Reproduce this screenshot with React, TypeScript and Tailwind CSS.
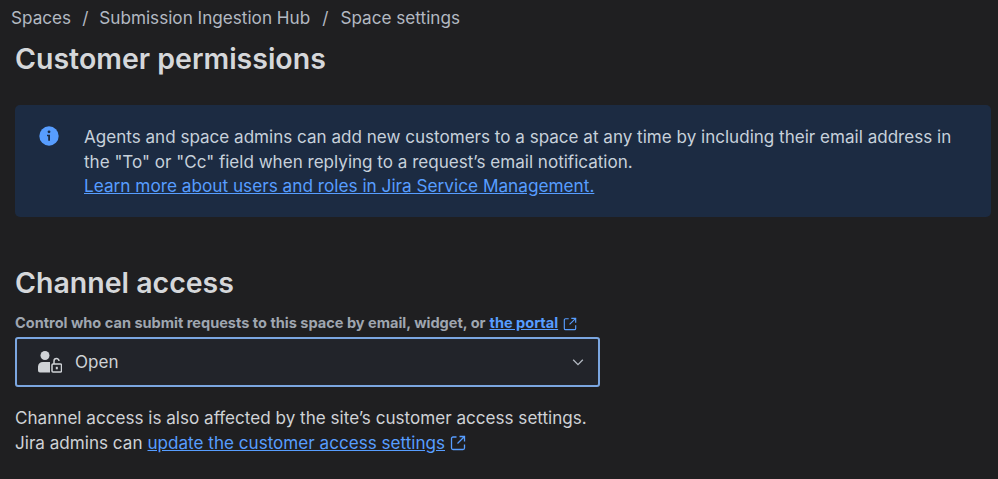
import React from 'react';

function ExternalIcon({ className }: { className: string }) {
  return (
    <svg viewBox="0 0 16 16" fill="none" stroke="currentColor" strokeWidth="1.3" className={className}>
      <path d="M6.500 2H3a1.500 1.500 0 0 0-1.500 1.500v9.500A1.500 1.500 0 0 0 3 14.500h10a1.500 1.500 0 0 0 1.500-1.500V9.500" />
      <path d="M9.500 1.500h5v5M14.500 1.500 7.500 8.500" />
    </svg>
  );
}

export default function App() {
  return (
    <div className="w-[998px] h-[479px] overflow-hidden bg-[#1f1f21] font-['Inter',sans-serif] text-[#cfd2d6]">
      {/* Breadcrumbs */}
      <nav className="flex items-center pl-[11px] pt-[6px] h-[30px] text-[17.150px] leading-6 text-[#b3b9c2]">
        <span>Spaces</span>
        <span className="mx-[11px]">/</span>
        <span>Submission Ingestion Hub</span>
        <span className="mx-[12px]">/</span>
        <span>Space settings</span>
      </nav>

      <div className="px-[15px]">
        <h1 className="mt-[10px] text-[28.500px] leading-[38px] font-semibold text-[#d5d7da]">Customer permissions</h1>

        {/* Info banner */}
        <div className="mt-[27px] w-[976px] h-[112px] flex rounded-[5px] bg-[#1c2b42] pl-[24px] pt-[20px]">
          <svg viewBox="0 0 20 20" className="w-[20px] h-[20px] mt-[1px] shrink-0">
            <circle cx="10" cy="10" r="9.700" fill="#579dff" />
            <circle cx="10" cy="5.800" r="1.400" fill="#1c2b42" />
            <path d="M8 8.800h3v6H9.200v-4.500H8z" fill="#1c2b42" />
          </svg>
          <div className="ml-[25px] text-[17.070px] leading-[24.500px]">
            <p className="text-[#c7d1db]">
              Agents and space admins can add new customers to a space at any time by including their email address in
              <br />
              the "To" or "Cc" field when replying to a request’s email notification.
            </p>
            <a className="text-[17.220px] text-[#579dff] underline">Learn more about users and roles in Jira Service Management.</a>
          </div>
        </div>

        <h2 className="mt-[47px] text-[28.500px] leading-[38px] font-semibold text-[#d5d7da]">Channel access</h2>

        <div className="mt-[12px] flex items-center h-[20px] text-[14.550px] font-bold text-[#9fa6b0]">
          <span>Control who can submit requests to this space by email, widget, or</span>
          <a className="ml-[4px] text-[#579dff] underline">the portal</a>
          <ExternalIcon className="ml-[5px] w-[14px] h-[14px] text-[#579dff]" />
        </div>

        {/* Select */}
        <div className="mt-[3px] w-[585px] h-[50px] flex items-center rounded-[3px] border-2 border-[#7ba6e0] bg-[#22242a] pl-[21px] pr-[13px]">
          <svg viewBox="0 0 24 24" className="w-[24px] h-[24px] text-[#cfd2d6]" fill="currentColor">
            <circle cx="7" cy="5.500" r="4.500" />
            <path d="M0 16.500a5 5 0 0 1 5-4.500h7v10.500H2a2 2 0 0 1-2-2z" />
            <rect x="14" y="14" width="9.500" height="8" rx="1" fill="none" stroke="currentColor" strokeWidth="1.500" />
            <path d="M16 14v-3a2.500 2.500 0 0 1 5 0" fill="none" stroke="currentColor" strokeWidth="1.500" />
            <rect x="17.800" y="16.800" width="2" height="2.500" />
          </svg>
          <span className="ml-[13px] text-[17.050px] text-[#cfd2d6]">Open</span>
          <svg viewBox="0 0 16 16" className="ml-auto w-[14px] h-[14px] text-[#b3b9c2]" fill="none" stroke="currentColor" strokeWidth="1.500">
            <path d="M2.500 5.500 8 11l5.500-5.500" />
          </svg>
        </div>

        <div className="mt-[19px] text-[17.100px] leading-[24.500px] text-[#cfd2d6]">
          <p>Channel access is also affected by the site’s customer access settings.</p>
          <p className="flex items-center">
            Jira admins can
            <a className="ml-[5px] text-[#579dff] underline">update the customer access settings</a>
            <ExternalIcon className="ml-[5px] w-[16px] h-[16px] text-[#579dff]" />
          </p>
        </div>
      </div>
    </div>
  );
}
